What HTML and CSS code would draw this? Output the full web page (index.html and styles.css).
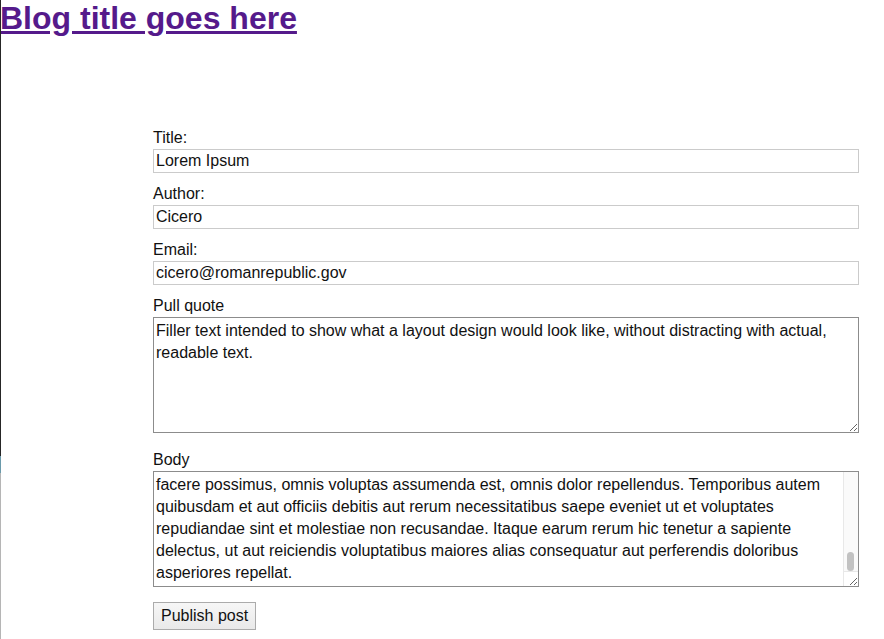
FILE: index.html
```html
<!DOCTYPE html>
<html lang="en">
<head>
<meta charset="utf-8">
<title>New post</title>
<link rel="stylesheet" href="styles.css">
<script src="script.js" defer></script>
</head>
<body>
<header class="site-header">
  <h1 class="site-title"><a class="site-link" href="#">Blog title goes here</a></h1>
</header>
<main class="editor">
  <form class="post-form">
    <div class="field">
      <label class="field-label" for="title">Title:</label>
      <input class="text-input" id="title" type="text" value="Lorem Ipsum">
    </div>
    <div class="field">
      <label class="field-label" for="author">Author:</label>
      <input class="text-input" id="author" type="text" value="Cicero">
    </div>
    <div class="field">
      <label class="field-label" for="email">Email:</label>
      <input class="text-input" id="email" type="text" value="cicero@romanrepublic.gov">
    </div>
    <div class="field field-area">
      <label class="field-label" for="quote">Pull quote</label>
      <textarea class="text-area" id="quote">Filler text intended to show what a layout design would look like, without distracting with actual, readable text.</textarea>
    </div>
    <div class="field field-area field-last">
      <label class="field-label" for="body">Body</label>
      <div class="scroll-box">
        <textarea class="text-area body-text" id="body">Lorem ipsum dolor sit amet, consectetur adipiscing elit, sed do eiusmod tempor incididunt ut labore et dolore magna aliqua. Ut enim ad minim veniam, quis nostrud exercitation ullamco laboris nisi ut aliquip ex ea commodo consequat. Duis aute irure dolor in reprehenderit in voluptate velit esse cillum dolore eu fugiat nulla pariatur. Excepteur sint occaecat cupidatat non proident, sunt in culpa qui officia deserunt mollit anim id est laborum.

Sed ut perspiciatis unde omnis iste natus error sit voluptatem accusantium doloremque laudantium, totam rem aperiam, eaque ipsa quae ab illo inventore veritatis et quasi architecto beatae vitae dicta sunt explicabo. Nemo enim ipsam voluptatem quia voluptas sit aspernatur aut odit aut fugit, sed quia consequuntur magni dolores eos qui ratione voluptatem sequi nesciunt. Neque porro quisquam est, qui dolorem ipsum quia dolor sit amet, consectetur, adipisci velit, sed quia non numquam eius modi tempora incidunt ut labore et dolore magnam aliquam quaerat voluptatem. Ut enim ad minima veniam, quis nostrum exercitationem ullam corporis suscipit laboriosam, nisi ut aliquid ex ea commodi consequatur? Quis autem vel eum iure reprehenderit qui in ea voluptate velit esse quam nihil molestiae consequatur, vel illum qui dolorem eum fugiat quo voluptas nulla pariatur?

At vero eos et accusamus et iusto odio dignissimos ducimus qui blanditiis praesentium voluptatum deleniti atque corrupti quos dolores et quas molestias excepturi sint occaecati cupiditate non provident, similique sunt in culpa qui officia deserunt mollitia animi, id est laborum et dolorum fuga. Et harum quidem rerum facilis est et expedita distinctio. Nam libero tempore, cum soluta nobis est eligendi optio cumque nihil impedit quo minus id quod maxime placeat
facere possimus, omnis voluptas assumenda est, omnis dolor repellendus. Temporibus autem quibusdam et aut officiis debitis aut rerum necessitatibus saepe eveniet ut et voluptates repudiandae sint et molestiae non recusandae. Itaque earum rerum hic tenetur a sapiente delectus, ut aut reiciendis voluptatibus maiores alias consequatur aut perferendis doloribus asperiores repellat.</textarea>
        <div class="scroll-track" aria-hidden="true"><div class="scroll-thumb"></div></div>
        <div class="scroll-corner" aria-hidden="true"></div>
      </div>
    </div>
    <div class="actions">
      <button class="publish-btn" type="button">Publish post</button>
    </div>
  </form>
</main>
</body>
</html>
```

FILE: script.js
```js
function scrollBodyToEnd() {
  var body = document.querySelector('.body-text');
  if (body) { body.scrollTop = body.scrollHeight; }
}
document.addEventListener('DOMContentLoaded', scrollBodyToEnd);
window.addEventListener('load', scrollBodyToEnd);
```

FILE: styles.css
```css
html, body {
  margin: 0;
  padding: 0;
  background: #fff;
}

body {
  font-family: "Liberation Sans", Arial, Helvetica, sans-serif;
  font-size: 16px;
  color: #111;
}

body::before {
  content: "";
  position: fixed;
  left: 0;
  top: 0;
  width: 1px;
  height: 100%;
  background: linear-gradient(to bottom, #262626 0, #262626 456px, #6a9aab 456px, #6a9aab 473px, #b5b5b5 473px);
}

.site-header {
  margin: 0;
}

.site-title {
  margin: 0;
  font-size: 32px;
  line-height: 36px;
  font-weight: bold;
}

.site-link {
  color: #551a8b;
  text-decoration: underline;
}

.editor {
  margin: 92px 25px 0 153px;
}

.post-form {
  display: flex;
  flex-direction: column;
}

.field {
  display: flex;
  flex-direction: column;
  gap: 2px;
  margin-bottom: 11px;
}

.field-area {
  margin-bottom: 17px;
}

.field-last {
  margin-bottom: 15px;
}

.field-label {
  display: block;
  line-height: 19px;
  color: #111;
}

.text-input {
  box-sizing: border-box;
  width: 100%;
  height: 24px;
  margin: 0;
  padding: 1px 2px;
  border: 1px solid #cbcbcb;
  border-radius: 0;
  font-family: inherit;
  font-size: 16px;
  color: #111;
  background: #fff;
  outline: none;
}

.text-area {
  box-sizing: border-box;
  display: block;
  width: 100%;
  height: 116px;
  margin: 0;
  padding: 2px 2px;
  border: 1px solid #8c8c8c;
  border-radius: 0;
  font-family: inherit;
  font-size: 16px;
  line-height: 22px;
  color: #111;
  background: #fff;
  resize: both;
  outline: none;
}

.scroll-box {
  position: relative;
}

.body-text {
  overflow-y: scroll;
  padding-right: 17px;
  scrollbar-width: none;
}

.scroll-track {
  position: absolute;
  top: 1px;
  right: 1px;
  bottom: 16px;
  width: 14px;
  background: #fafafa;
  border-left: 1px solid #e8e8e8;
  display: flex;
  flex-direction: column;
  justify-content: flex-end;
  align-items: center;
}

.scroll-thumb {
  width: 7px;
  height: 19px;
  margin-right: 1px;
  border-radius: 4px;
  background: #c2c2c2;
}

.scroll-corner {
  position: absolute;
  right: 1px;
  bottom: 1px;
  width: 14px;
  height: 14px;
  border-left: 1px solid #e8e8e8;
  border-top: 1px solid #e8e8e8;
  pointer-events: none;
}

.actions {
  display: flex;
}

.publish-btn {
  box-sizing: border-box;
  height: 28px;
  margin: 0;
  padding: 0 7px;
  border: 1px solid #ababab;
  border-radius: 0;
  background: linear-gradient(to bottom, #f6f6f6, #e9e9e9);
  font-family: inherit;
  font-size: 16px;
  color: #111;
}
```
